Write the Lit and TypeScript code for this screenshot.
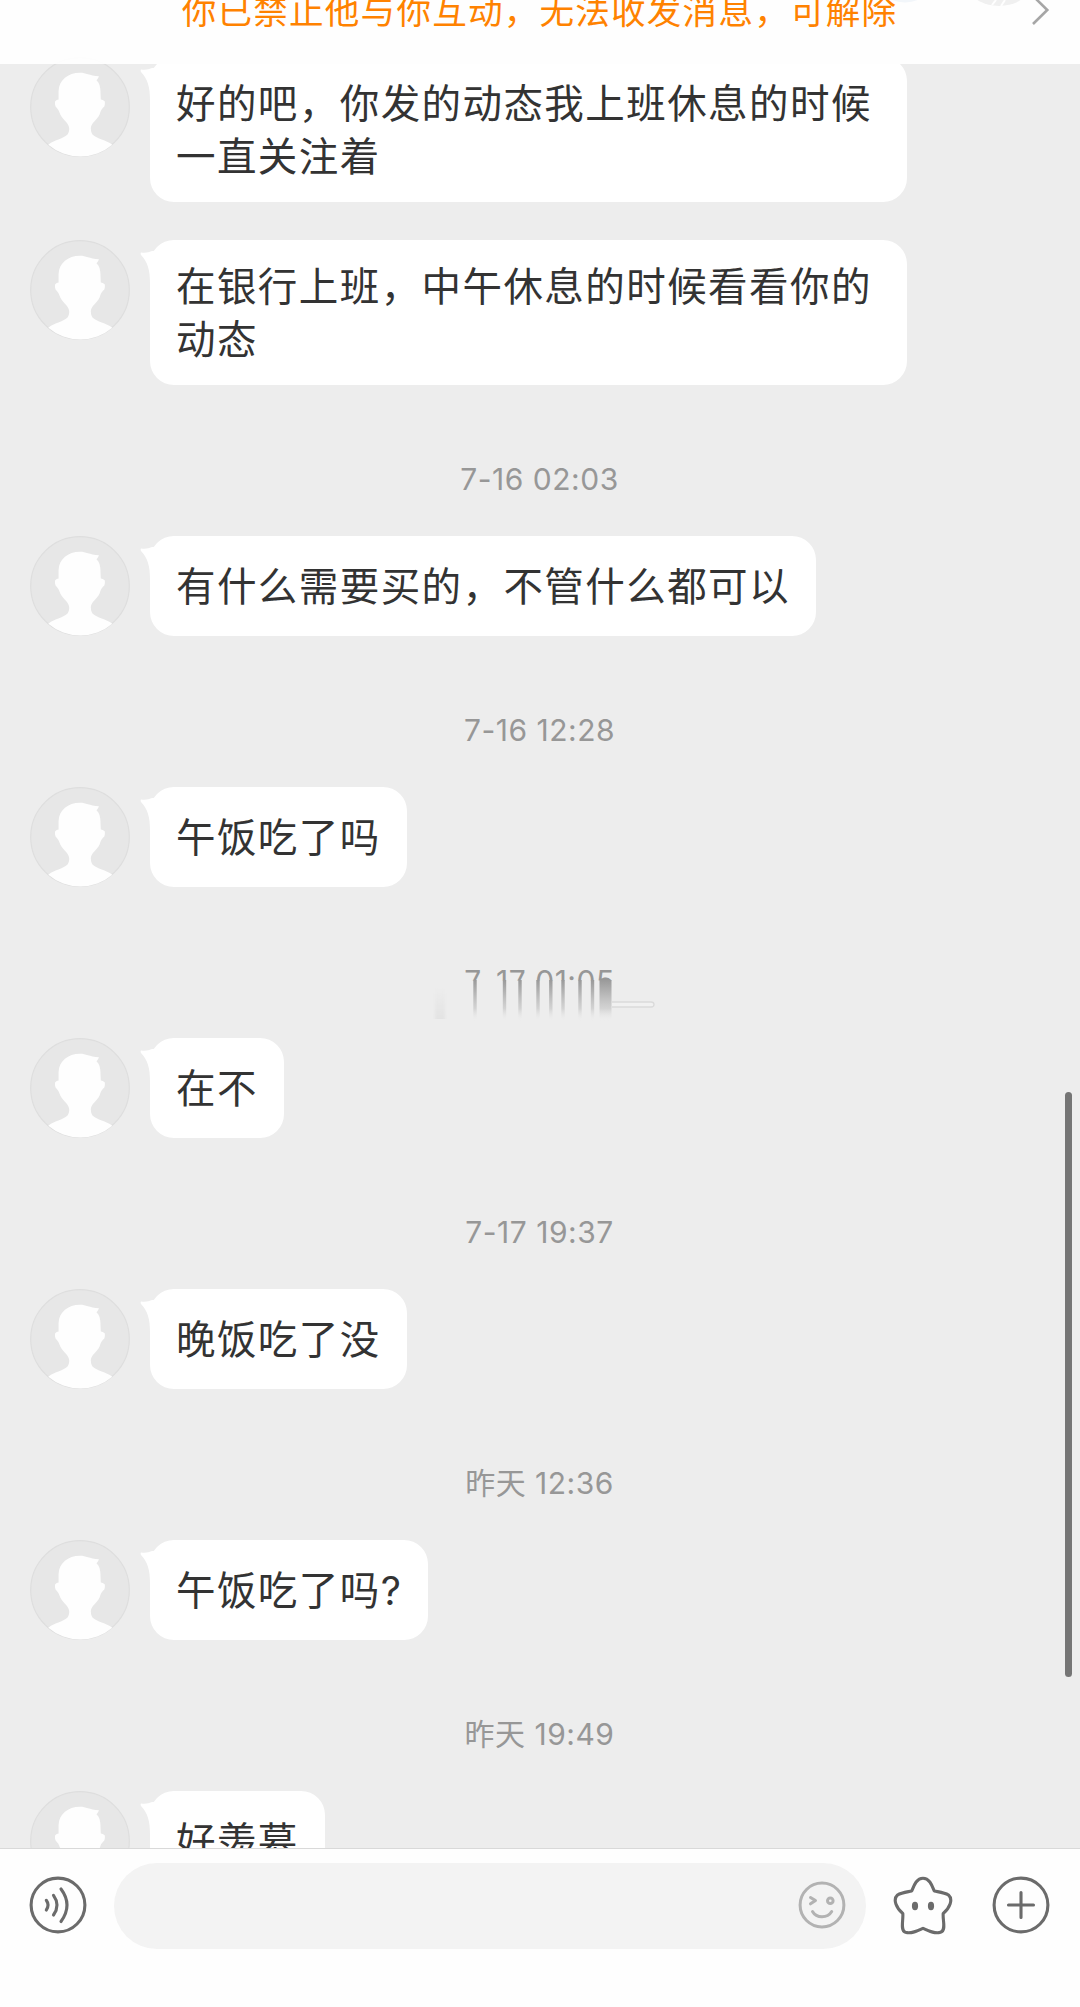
import { LitElement, html, css, svg } from "lit";
import { customElement, property } from "lit/decorators.js";

type Item =
  | { kind: "msg"; text: string }
  | { kind: "time"; text: string; smeared?: boolean };

const items: Item[] = [
  { kind: "msg", text: "好的吧，你发的动态我上班休息的时候一直关注着" },
  { kind: "msg", text: "在银行上班，中午休息的时候看看你的动态" },
  { kind: "time", text: "7-16 02:03" },
  { kind: "msg", text: "有什么需要买的，不管什么都可以" },
  { kind: "time", text: "7-16 12:28" },
  { kind: "msg", text: "午饭吃了吗" },
  { kind: "time", text: "7-17 01:05", smeared: true },
  { kind: "msg", text: "在不" },
  { kind: "time", text: "7-17 19:37" },
  { kind: "msg", text: "晚饭吃了没" },
  { kind: "time", text: "昨天 12:36" },
  { kind: "msg", text: "午饭吃了吗?" },
  { kind: "time", text: "昨天 19:49" },
  { kind: "msg", text: "好羡慕" },
];

@customElement("chat-message")
class ChatMessage extends LitElement {
  @property() text = "";

  static styles = css`
    :host {
      display: flex;
      align-items: flex-start;
      padding-left: 30px;
      gap: 20px;
    }
    .avatar {
      width: 100px;
      height: 100px;
      flex: none;
    }
    .bubble {
      position: relative;
      box-sizing: border-box;
      min-height: 100px;
      max-width: 757px;
      padding: 21px 26px 18px;
      border-radius: 24px;
      background: #fff;
      color: #333;
      font-size: 39.5px;
      line-height: 53px;
      letter-spacing: 1.43px;
      display: flex;
      align-items: center;
    }
    .tail {
      position: absolute;
      left: -10px;
      top: 11px;
      width: 24px;
      height: 32px;
    }
    .text {
      position: relative;
    }
  `;

  render() {
    return html`
      <svg class="avatar" viewBox="0 0 100 100">
        <circle cx="50" cy="50" r="49.3" fill="#e7e7e7" stroke="#dedede" stroke-width="1.2" />
        <path
          fill="#fefefe"
          d="M50 15.7C56 15.7 59 18.5 69 19.3Q68 21.8 66.5 23.3C69.5 26 70.4 30 70.5 35L70.8 42.5Q73 42.7 74.7 44.2Q75.3 46.5 74.3 49.5Q71 52 69.6 57.5C67 63 61 66 60.8 71.5Q60.8 75 62.5 77.5C67 82 76 83 82.3 87.7A49.5 49.5 0 0 1 18.3 87.7C24 83 33 82 37.5 77.5Q39.4 75 39.2 71.5C39 66 33 63 30.3 57.5Q28.5 52 25.6 49.5Q24.5 46.5 25.2 44.2Q26.5 42.7 28.6 42.5L28.6 34C29 23 38 15.7 50 15.7Z"
        />
      </svg>
      <div class="bubble">
        <svg class="tail" viewBox="0 0 24 32">
          <path fill="#fff" d="M1.5 1.5Q8 2.500 14 -1H24V32H10C10 20 8 11 1 4Q0 1.5 1.5 1.5Z" />
        </svg>
        <span class="text">${this.text}</span>
      </div>
    `;
  }
}

@customElement("chat-time")
class ChatTime extends LitElement {
  @property() text = "";
  @property({ type: Boolean }) smeared = false;

  static styles = css`
    :host {
      display: flex;
      justify-content: center;
      position: relative;
      height: 40px;
      line-height: 40px;
      font-size: 30px;
      letter-spacing: 0.5px;
      color: #979797;
    }
    .plain,
    .clipped {
      margin-right: 1px;
    }
    .clipped {
      clip-path: inset(0 0 20px 0);
    }
    .smear {
      position: absolute;
      left: 420px;
      top: 0;
      width: 250px;
      height: 70px;
    }
  `;

  render() {
    const streaks = [55, 84.5, 100, 118, 130.8, 143, 160, 172.5];
    return html`
      <span class=${this.smeared ? "clipped" : "plain"}>${this.text}</span>
      ${this.smeared
        ? html`<svg class="smear" viewBox="0 0 250 70">
            <defs>
              <linearGradient id="fade" x1="0" y1="0" x2="0" y2="1">
                <stop offset="0" stop-color="#9a9a9a" />
                <stop offset="0.3" stop-color="#b4b4b4" />
                <stop offset="0.7" stop-color="#cdcdcd" stop-opacity="0.8" />
                <stop offset="1" stop-color="#ededed" stop-opacity="0" />
              </linearGradient>
              <linearGradient id="ghost" x1="0" y1="0" x2="0" y2="1">
                <stop offset="0" stop-color="#ededed" />
                <stop offset="1" stop-color="#e3e3e3" />
              </linearGradient>
              <filter id="soft" x="-50%" y="-10%" width="200%" height="120%">
                <feGaussianBlur stdDeviation="1.8 0.6" />
              </filter>
            </defs>
            <rect x="15" y="26" width="10" height="32" fill="url(#ghost)" filter="url(#soft)" />
            ${streaks.map(
              (x) => svg`<rect x=${x - 1.7} y="19" width="3.4" height="41" fill="url(#fade)" />`
            )}
            <rect x="179.5" y="19" width="12" height="41" fill="url(#fade)" />
            <path d="M192 41H231Q234 41 234 43.5Q234 46 231 46H192" fill="#f1f1f1" stroke="#dadada" stroke-width="1.3" />
          </svg>`
        : null}
    `;
  }
}

@customElement("app-root")
class AppRoot extends LitElement {
  static styles = css`
    :host {
      display: flex;
      flex-direction: column;
      position: relative;
      width: 1080px;
      height: 2007px;
      overflow: hidden;
      background: #ededed;
      font-family: Inter, "Noto Sans CJK SC", sans-serif;
    }
    .header {
      position: relative;
      z-index: 1;
      flex: none;
      height: 64px;
      display: flex;
      justify-content: center;
      background: rgba(254, 254, 254, 0.97);
    }
    .notice {
      height: 40px;
      margin: -9.5px 1px 0 0;
      line-height: 40px;
      font-size: 34.6px;
      letter-spacing: 1.2px;
      color: #ff8200;
      white-space: nowrap;
    }
    .corner {
      position: absolute;
      right: 0;
      top: 0;
      width: 220px;
      height: 40px;
    }
    .list {
      flex: 1;
      min-height: 0;
      overflow: hidden;
      margin-top: -7.5px;
      display: flex;
      flex-direction: column;
    }
    chat-message {
      flex: none;
      margin-bottom: 38px;
    }
    chat-time {
      flex: none;
      margin: 36px 0 37px;
    }
    .scrollbar {
      position: absolute;
      left: 1064.5px;
      top: 1092px;
      width: 7.5px;
      height: 585px;
      border-radius: 4px;
      background: #757575;
    }
    .composer {
      flex: none;
      box-sizing: border-box;
      height: 159px;
      border-top: 1px solid #d9d9d9;
      background: #fefefe;
      padding: 14px 29px 0 28px;
      display: flex;
      align-items: flex-start;
    }
    .input {
      width: 753px;
      height: 85.5px;
      box-sizing: border-box;
      border-radius: 43px;
      background: #f3f3f3;
      margin: 0 27px 0 25.5px;
      padding-right: 20.5px;
      display: flex;
      align-items: center;
      justify-content: flex-end;
    }
    .icon {
      flex: none;
      width: 60px;
      height: 60px;
      margin-top: 12px;
      fill: none;
      stroke: #6b6b6b;
      stroke-width: 3.1;
      stroke-linecap: round;
      stroke-linejoin: round;
    }
    .plus {
      margin-left: 38px;
    }
    .smile {
      flex: none;
      width: 48px;
      height: 48px;
      margin-top: -1px;
      fill: none;
      stroke: #b2b2b2;
      stroke-width: 3;
      stroke-linecap: round;
      stroke-linejoin: round;
    }
    .eye {
      fill: #6b6b6b;
      stroke: none;
    }
  `;

  render() {
    return html`
      <div class="header">
        <div class="notice">你已禁止他与你互动，无法收发消息，可解除</div>
        <svg class="corner" viewBox="0 0 220 40">
          <ellipse cx="45" cy="-9" rx="20" ry="11.5" fill="#f2f6fa" />
          <ellipse cx="139" cy="-9" rx="27" ry="15" fill="#f0f0f0" />
          <path d="M132 5l4 -5M141 6l4 -6" stroke="#fefefe" stroke-width="2" />
          <path d="M173 -4L187.300 10L173 24" fill="none" stroke="#a6a6a6" stroke-width="2.6" />
        </svg>
      </div>
      <div class="list">
        ${items.map((i) =>
          i.kind === "msg"
            ? html`<chat-message .text=${i.text}></chat-message>`
            : html`<chat-time .text=${i.text} .smeared=${!!i.smeared}></chat-time>`
        )}
      </div>
      <div class="scrollbar"></div>
      <div class="composer">
        <svg class="icon" viewBox="0 0 60 60">
          <circle cx="30" cy="30" r="26.9" />
          <path d="M18.3 25.3Q21.8 30 18.3 35M25.5 20.3Q32.5 30 25.5 40M33 14Q45 30 33 46.5" />
        </svg>
        <div class="input">
          <svg class="smile" viewBox="0 0 48 48">
            <circle cx="24" cy="24" r="21.9" />
            <path d="M12.5 16.5L17.5 19.5L12.5 22.8M14.5 30.5C18.5 37.5 29.5 37.5 33.7 30.5" />
            <circle cx="32.3" cy="19.7" r="2.8" />
          </svg>
        </div>
        <svg class="icon" viewBox="0 0 60 60">
          <path
            d="M30 3.2C36.5 3.2 39 10.5 41.3 16C46 17 51.5 17.5 55.5 20C60.5 24.5 56.5 33.5 50.2 38.5C49.5 45 53.5 55.5 47.5 57.3C41.5 59 36 56 30 53.3C24 56 18.5 59 12.5 57.3C7 55.5 10.5 45 9.8 38.5C3.5 33.5 -.5 24.5 4.5 20C8.5 17.5 14 17 18.7 16C21 10.5 23.5 3.2 30 3.2Z"
          />
          <ellipse class="eye" cx="22" cy="31" rx="3.1" ry="4.2" />
          <ellipse class="eye" cx="38" cy="31" rx="3.1" ry="4.2" />
        </svg>
        <svg class="icon plus" viewBox="0 0 60 60">
          <circle cx="30" cy="30" r="26.9" />
          <path d="M30 17.500V42.500M17.500 30H42.500" />
        </svg>
      </div>
    `;
  }
}
